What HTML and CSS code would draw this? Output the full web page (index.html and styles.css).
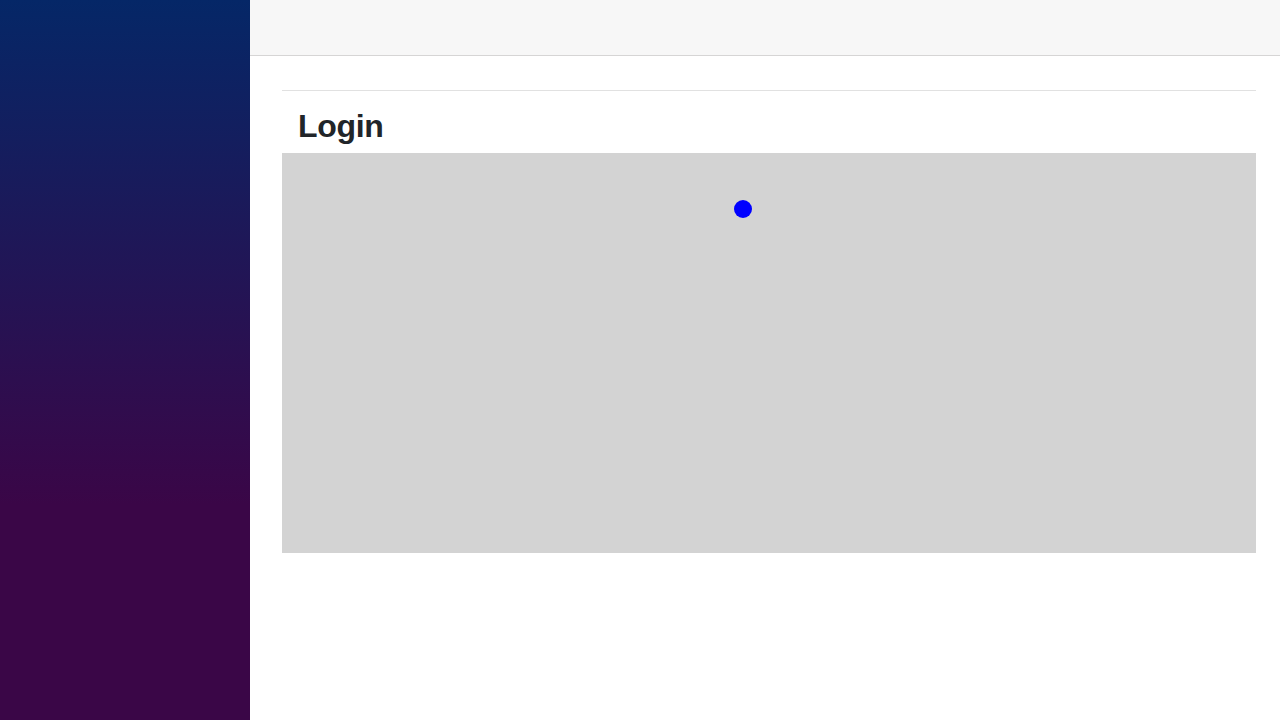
FILE: index.html
```html
<!DOCTYPE html>
<html lang="en">
<head>
<meta charset="utf-8">
<title>Login</title>
<link rel="stylesheet" href="styles.css">
</head>
<body>
<div class="page">
  <div class="sidebar"></div>
  <main class="main">
    <div class="top-row"></div>
    <article class="content">
      <hr class="rule">
      <h1 class="title">Login</h1>
      <div class="canvas">
        <div class="dot" style="left:452px;top:47px"></div>
      </div>
    </article>
  </main>
</div>
</body>
</html>
```
FILE: styles.css
```css
html, body {
  margin: 0;
  padding: 0;
  height: 100%;
}
body {
  font-family: "Liberation Sans", Arial, sans-serif;
  color: #212529;
  background: #fff;
}
.page {
  display: flex;
  height: 720px;
}
.sidebar {
  width: 250px;
  flex: 0 0 250px;
  background-image: linear-gradient(180deg, rgb(5, 39, 103) 0%, #3a0647 70%);
}
.main {
  flex: 1;
  display: flex;
  flex-direction: column;
}
.top-row {
  height: 55px;
  background: #f7f7f7;
  border-bottom: 1px solid #d6d5d5;
  flex: 0 0 auto;
}
.content {
  padding: 34px 24px 0 32px;
}
.rule {
  margin: 0;
  border: 0;
  border-top: 1px solid #e1e1e1;
  height: 0;
}
.title {
  margin: 16px 0 8px 16px;
  font-size: 32px;
  font-weight: 700;
  line-height: 1.2;
  letter-spacing: -0.3px;
}
.canvas {
  position: relative;
  height: 400px;
  background: #d3d3d3;
}
.dot {
  position: absolute;
  width: 18px;
  height: 18px;
  border-radius: 50%;
  background: #0000ff;
}
```
